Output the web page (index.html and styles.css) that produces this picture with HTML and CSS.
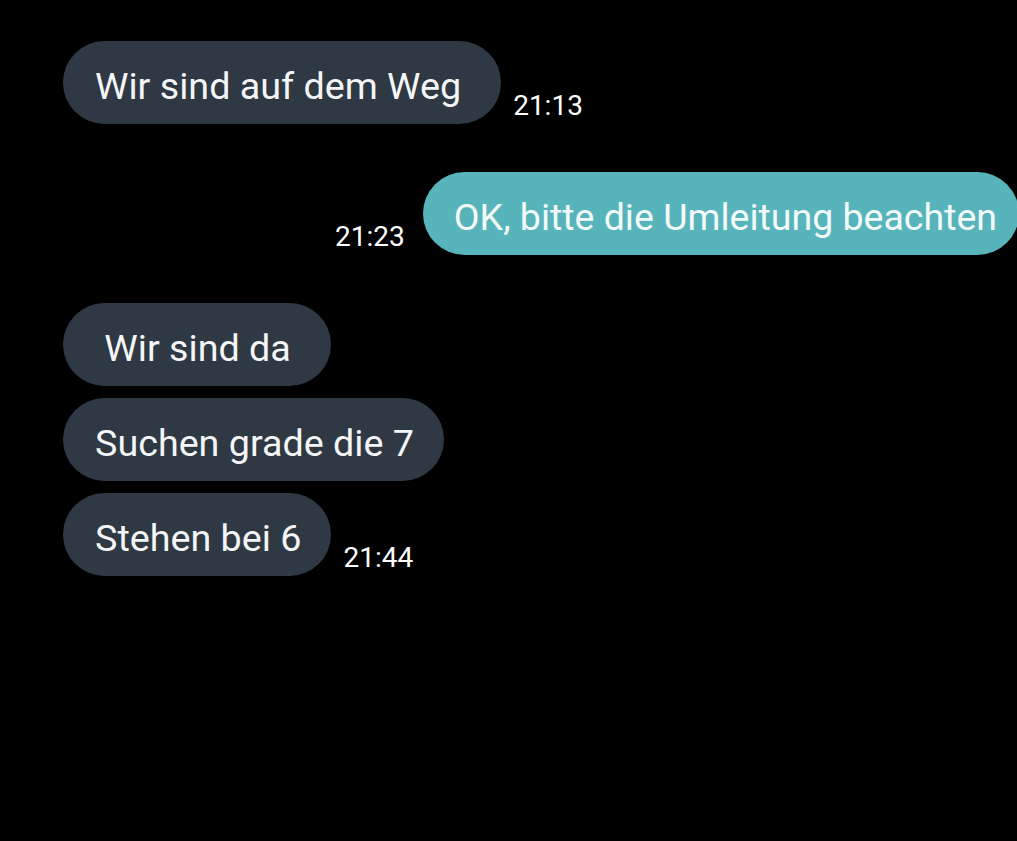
FILE: index.html
```html
<!DOCTYPE html>
<html lang="de">
<head>
<meta charset="utf-8">
<link rel="stylesheet" href="styles.css">
</head>
<body>
<main class="chat">
  <div class="row in first">
    <div class="bubble dark">Wir sind auf dem Weg</div>
    <span class="time">21:13</span>
  </div>
  <div class="row out group">
    <span class="time">21:23</span>
    <div class="bubble teal">OK, bitte die Umleitung beachten</div>
  </div>
  <div class="stack group">
    <div class="row in">
      <div class="bubble dark"> Wir sind da</div>
    </div>
    <div class="row in">
      <div class="bubble dark tight">Suchen grade die 7</div>
    </div>
    <div class="row in">
      <div class="bubble dark tight">Stehen bei 6</div>
      <span class="time">21:44</span>
    </div>
  </div>
</main>
</body>
</html>
```
FILE: styles.css
```css
html, body {
  margin: 0;
  padding: 0;
  background: #000;
  height: 100%;
}
body {
  font-family: Roboto, "Noto Sans", sans-serif;
  color: #fff;
}
.chat {
  display: flex;
  flex-direction: column;
  padding: 41px 0 0 63px;
}
.row {
  display: flex;
  align-items: flex-end;
}
.row.out {
  justify-content: flex-end;
  margin-right: -2px;
}
.group {
  margin-top: 48px;
}
.stack {
  display: flex;
  flex-direction: column;
  gap: 12px;
}
.bubble {
  height: 83px;
  box-sizing: border-box;
  display: flex;
  align-items: center;
  padding: 7px 40px 0 32px;
  border-radius: 42px;
  font-size: 37.7px;
  white-space: pre;
}
.bubble.tight {
  padding-right: 30px;
}
.bubble.dark {
  background: #2f3944;
  color: #f4f5f6;
}
.bubble.teal {
  background: #57b4bb;
  color: #f2fafa;
  font-size: 37.5px;
  padding: 7px 22px 0 31px;
}
.time {
  font-size: 28px;
  line-height: 1;
  padding-bottom: 4px;
  margin-left: 12px;
  color: #fff;
}
.out .time {
  margin-left: 0;
  margin-right: 18px;
}
```
